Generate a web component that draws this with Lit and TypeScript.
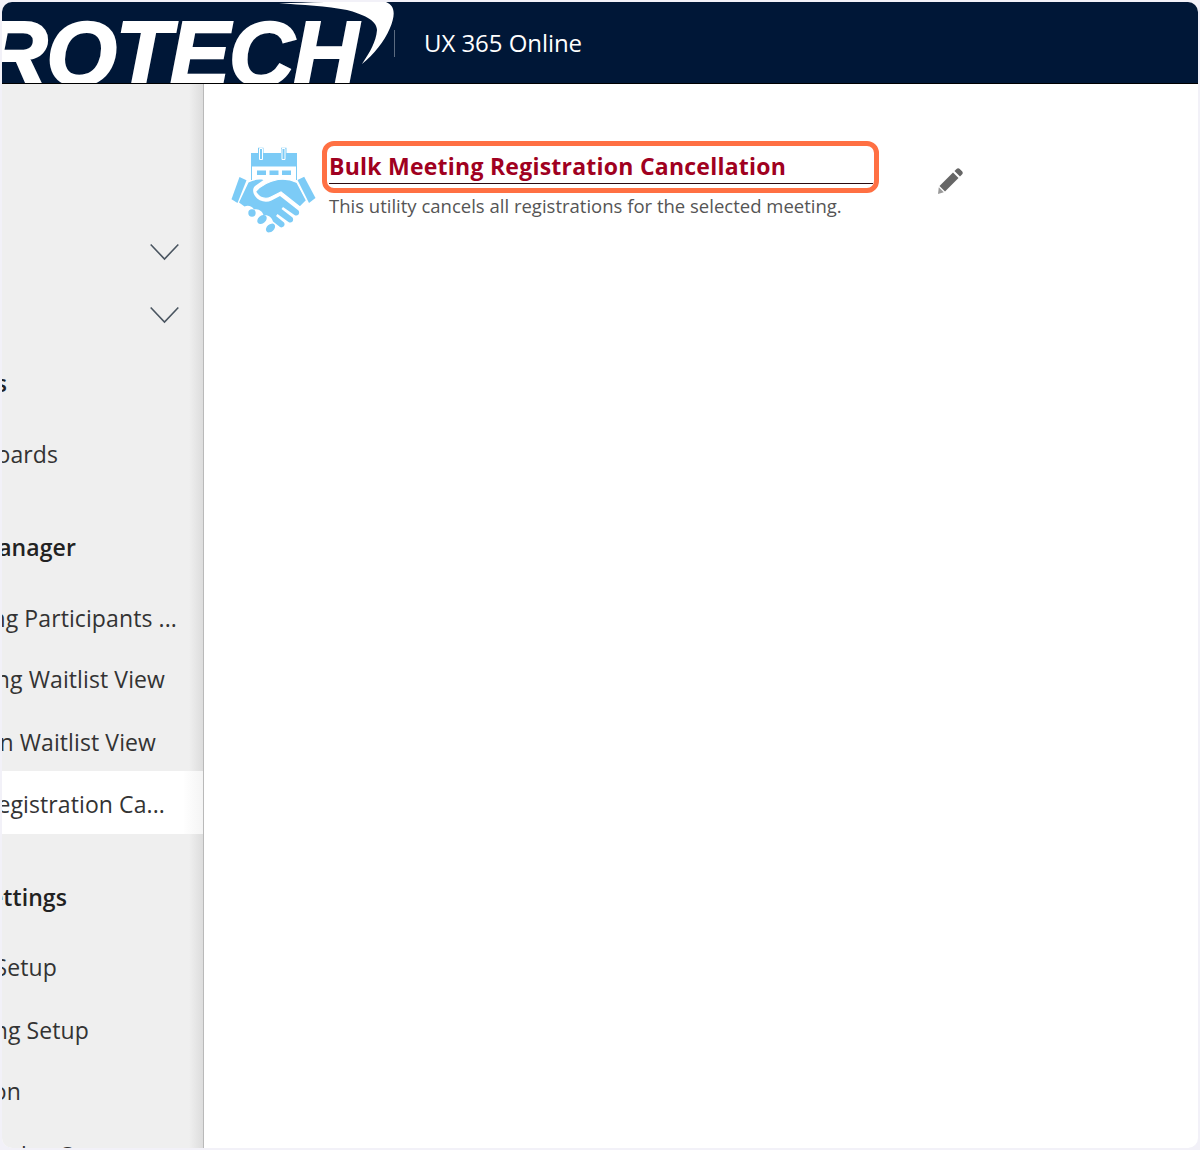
import { LitElement, css, html, svg } from "lit";
import { customElement } from "lit/decorators.js";

// sidebar rows: label, gap above, right gap of the text, bold / selected flags
type Row = {
  label: string;
  gap: number;
  right: number;
  bold?: boolean;
  selected?: boolean;
};

const rows: Row[] = [
  { label: "Reports", gap: 8, right: 196, bold: true },
  { label: "Dashboards", gap: 13, right: 145 },
  { label: "Meeting Manager", gap: 35, right: 127, bold: true },
  { label: "Meeting Participants ...", gap: 13, right: 26 },
  { label: "Meeting Waitlist View", gap: 3, right: 38 },
  { label: "Session Waitlist View", gap: 5, right: 47 },
  { label: "Bulk Registration Ca...", gap: 0, right: 38, selected: true },
  { label: "Settings", gap: 34, right: 136, bold: true },
  { label: "Meeting Setup", gap: 12, right: 146 },
  { label: "Meeting Setup", gap: 5, right: 114 },
  { label: "Location", gap: 3, right: 182 },
  { label: "Event Ticket Setup", gap: 6, right: 80 },
];

const chevron = svg`<svg class="chev" width="29" height="18" viewBox="0 0 29 18" fill="none" stroke="#4a5560" stroke-width="1.6"><path d="M.7 1.500 14.500 16 28.300 1.500"/></svg>`;

const handshake = svg`<svg width="86" height="86" viewBox="0 0 86 86" fill="#7ccbf6">
  <path d="M20 6h7V.8h5.500V6h17.500V.8h5.500V6H66v27H20z"/>
  <path d="M28.500 1.500h3v11h-3zM51 1.500h3v11h-3z" stroke="#fff" stroke-width="1"/>
  <path d="M21 19.500h44V33H21z" fill="#fff"/>
  <path d="M26 23.500h9v4.500h-9zM38.500 23.500h9v4.500h-9zM51 23.500h9v4.500h-9z"/>
  <path d="M8.500 30l7 3.200L6.500 56 .5 52.200z"/>
  <path d="M66.500 33l6.700-3.200L84.500 51l-6.500 5z"/>
  <path d="M24.500 44.500C30 38.500 39 34 47 32.500c7-1 13 0 19 3l9.500 18-6.500 6.500-19-15-10 5c-5 2.500-12 1.500-15.500-5.500z" stroke="#fff" stroke-width="1.200"/>
  <path d="M17.500 35.500c5-2.500 9.500-3.500 15-2.500l-8.500 6c-2.500 2.500-2.500 6 0 10 3.500 5.500 11 7 16.500 4.500l8.500-4.500 18.500 14.500c2 3-1 6.500-4 4.500L52 60l-1.500 2 11 8.500c2 3-1 6.500-4 4.500l-11-8-1.500 2 8 6.500c2 3-1.500 6-4 4.500l-7-5.500c-1-4-5-7-9.500-6-.5-4-5-7.500-9.500-6-2-3.500-6-4.500-9.500-3l-5.500-4z"/>
  <circle cx="21" cy="66" r="3.700"/>
  <ellipse cx="31" cy="72.500" rx="5.400" ry="3.800" transform="rotate(-42 31 72.500)"/>
  <ellipse cx="39.500" cy="81" rx="5.200" ry="3.600" transform="rotate(-42 39.500 81)"/>
</svg>`;

const pencil = svg`<svg width="26" height="26" viewBox="0 0 26 26" fill="#666"><path d="M19.500 1c1-1 2.300-1 3.300 0l2.200 2.200c1 1 1 2.300 0 3.300L23 8.500 17.500 3z"/><path d="M16 4.500l5.500 5.500L8 23.500 2.500 18z"/><path d="M1.800 19.300l5 5-5.800 1.700z" fill="#999"/></svg>`;

@customElement("app-root")
export class AppRoot extends LitElement {
  static styles = css`
    :host {
      display: block;
      width: 1200px;
      height: 1150px;
      background: #f2f1f8;
      font-family: "Open Sans", "Noto Sans", sans-serif;
    }
    .window {
      margin: 0 2px;
      position: relative;
      top: 2px;
      height: 1146px;
      background: #fff;
      border-radius: 10px;
      overflow: hidden;
      display: flex;
      flex-direction: column;
    }
    .topbar {
      height: 81px;
      flex: none;
      background: #001737;
      border-bottom: 1px solid #000;
      display: flex;
      align-items: center;
      overflow: hidden;
    }
    .brand {
      width: 392px;
      height: 81px;
      flex: none;
      position: relative;
      overflow: hidden;
    }
    .brand-name {
      position: absolute;
      left: -20px;
      top: 1px;
      font: italic 700 91px/102px "Liberation Sans", Arial, sans-serif;
      letter-spacing: -1.500px;
      color: #fff;
      -webkit-text-stroke: 2px #fff;
      white-space: nowrap;
    }
    .swoosh {
      position: absolute;
      left: 0;
      top: 0;
    }
    .divider {
      width: 1px;
      height: 27px;
      margin-top: 2px;
      background: #5b6b80;
      flex: none;
    }
    .product {
      margin-left: 29px;
      color: #fff;
      font-size: 24px;
      letter-spacing: -0.050px;
      white-space: nowrap;
    }
    .body {
      flex: 1;
      display: flex;
      min-height: 0;
    }
    .sidebar {
      width: 202px;
      flex: none;
      box-sizing: border-box;
      background: linear-gradient(to right, #efefef 93%, #dddddd 100%);
      border-right: 1px solid #b9b9b9;
      padding-top: 136px;
      overflow: hidden;
    }
    .chev-row {
      height: 63px;
      display: flex;
      justify-content: flex-end;
      align-items: center;
      padding-right: 24px;
    }
    .row {
      height: 58px;
      display: flex;
      justify-content: flex-end;
      align-items: center;
      white-space: nowrap;
      font-size: 23px;
      letter-spacing: 0.100px;
      color: #333;
      box-sizing: border-box;
    }
    .row.bold {
      font-weight: 600;
      color: #222;
    }
    .row.selected {
      height: 63px;
      padding-top: 3px;
      background: linear-gradient(to right, #fff 90%, #f4f4f4 100%);
    }
    .content {
      flex: 1;
      padding: 63px 0 0 27px;
      display: flex;
      align-items: flex-start;
    }
    .tile-icon {
      flex: none;
      width: 86px;
      height: 86px;
    }
    .tile-text {
      margin-left: 12px;
      width: 549px;
      flex: none;
    }
    .title {
      position: relative;
      height: 37px;
      box-sizing: border-box;
      border-bottom: 1px solid #2a0a10;
      width: 544px;
      color: #a00020;
      font-size: 23px;
      font-weight: 700;
      letter-spacing: 0.240px;
      line-height: 38px;
      white-space: nowrap;
    }
    .highlight {
      position: absolute;
      left: -7px;
      top: -6px;
      width: 557px;
      height: 52px;
      box-sizing: border-box;
      border: 5px solid #ff7043;
      border-radius: 12px;
    }
    .desc {
      margin-top: 10px;
      font-size: 18.500px;
      line-height: 24px;
      color: #555;
      white-space: nowrap;
    }
    .edit {
      flex: none;
      margin: 21px 0 0 59px;
      width: 26px;
      height: 26px;
    }
  `;

  render() {
    return html`
      <div class="window">
        <header class="topbar">
          <div class="brand">
            <span class="brand-name">ROTECH</span>
            <svg class="swoosh" width="392" height="81" viewBox="0 0 392 81">
              <path
                fill="#fff"
                d="M277 1C320 1 370 -3 384 0C394 4 393 14 388 26C382 40 372 52 360 62C368 50 374 40 375 28C375 18 360 12 345 8C325 4 300 3 277 1Z"
              />
            </svg>
          </div>
          <div class="divider"></div>
          <div class="product">UX 365 Online</div>
        </header>
        <div class="body">
          <nav class="sidebar">
            <div class="chev-row">${chevron}</div>
            <div class="chev-row">${chevron}</div>
            ${rows.map(
              (r) => html`
                <div
                  class="row ${r.bold ? "bold" : ""} ${r.selected
                    ? "selected"
                    : ""}"
                  style="margin-top:${r.gap}px;padding-right:${r.right}px"
                >
                  ${r.label}
                </div>
              `,
            )}
          </nav>
          <main class="content">
            <div class="tile-icon">${handshake}</div>
            <div class="tile-text">
              <div class="title">
                Bulk Meeting Registration Cancellation
                <div class="highlight"></div>
              </div>
              <div class="desc">
                This utility cancels all registrations for the selected meeting.
              </div>
            </div>
            <div class="edit">${pencil}</div>
          </main>
        </div>
      </div>
    `;
  }
}
